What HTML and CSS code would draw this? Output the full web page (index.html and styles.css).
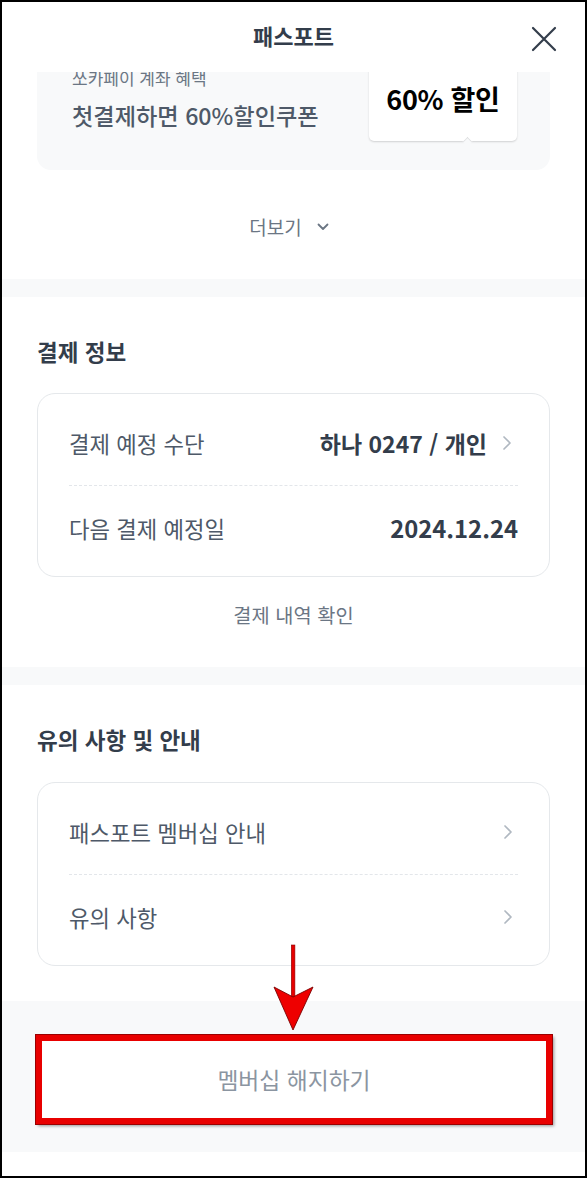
FILE: index.html
```html
<!DOCTYPE html>
<html lang="ko">
<head>
<meta charset="utf-8">
<title>패스포트</title>
<link rel="stylesheet" href="styles.css">
</head>
<body>
<div class="phone">
  <header class="header">
    <h1 class="title">패스포트</h1>
    <button class="close" aria-label="닫기">
      <svg width="26" height="26" viewBox="0 0 26 26"><path d="M2 2 L24 24 M24 2 L2 24" stroke="#333d4b" stroke-width="2.2" stroke-linecap="round" fill="none"/></svg>
    </button>
  </header>
  <div class="scroll">
    <div class="scroll-inner">
      <section class="section promo-section">
        <div class="promo-card">
          <div class="promo-text">
            <p class="promo-sub">쏘카페이 계좌 혜택</p>
            <p class="promo-title">첫결제하면 60%할인쿠폰</p>
          </div>
          <div class="coupon"><span>60% 할인</span></div>
        </div>
        <div class="more">
          <span>더보기</span>
          <svg width="14" height="10" viewBox="0 0 14 10"><path d="M2.5 2.5 L7 7 L11.5 2.5" stroke="#6b7684" stroke-width="1.8" fill="none" stroke-linecap="round" stroke-linejoin="round"/></svg>
        </div>
      </section>

      <section class="section info-section">
        <h2 class="sec-title">결제 정보</h2>
        <div class="card">
          <div class="row">
            <span class="label">결제 예정 수단</span>
            <span class="value-wrap"><span class="value">하나 0247 / 개인</span>
              <svg class="chev" width="20" height="20" viewBox="0 0 20 20"><path d="M4 4 L10 10 L4 16" stroke="#b0b8c1" stroke-width="1.7" fill="none" stroke-linecap="round" stroke-linejoin="round"/></svg>
            </span>
          </div>
          <div class="row">
            <span class="label">다음 결제 예정일</span>
            <span class="value">2024.12.24</span>
          </div>
        </div>
        <div class="link">결제 내역 확인</div>
      </section>

      <section class="section notice-section">
        <h2 class="sec-title">유의 사항 및 안내</h2>
        <div class="card">
          <div class="row">
            <span class="label">패스포트 멤버십 안내</span>
            <svg class="chev" width="20" height="20" viewBox="0 0 20 20"><path d="M4 4 L10 10 L4 16" stroke="#b0b8c1" stroke-width="1.7" fill="none" stroke-linecap="round" stroke-linejoin="round"/></svg>
          </div>
          <div class="row">
            <span class="label">유의 사항</span>
            <svg class="chev" width="20" height="20" viewBox="0 0 20 20"><path d="M4 4 L10 10 L4 16" stroke="#b0b8c1" stroke-width="1.7" fill="none" stroke-linecap="round" stroke-linejoin="round"/></svg>
          </div>
        </div>
      </section>

      <div class="bottom-area">
        <button class="cancel">멤버십 해지하기</button>
      </div>
      <div class="footer-space"></div>
    </div>
  </div>
  <svg class="arrow" width="46" height="92" viewBox="0 0 46 92">
    <rect x="19.3" y="3" width="3.6" height="54" fill="#e60000" stroke="#8a0000" stroke-width="0.6"/>
    <polygon points="2,45 21,55 41,45 21,88" fill="#ee0000" stroke="#7a0000" stroke-width="0.9" stroke-linejoin="miter"/>
  </svg>
</div>
</body>
</html>
```

FILE: styles.css
```css
* { box-sizing: border-box; }
html, body { margin: 0; padding: 0; background: #fff; }
body {
  font-family: "Noto Sans CJK KR", "Noto Sans", sans-serif;
  color: #333d4b;
}
p, h1, h2 { margin: 0; }

.phone {
  position: relative;
  width: 587px;
  height: 1178px;
  border: 2px solid #000;
  overflow: hidden;
  background: #fff;
  display: flex;
  flex-direction: column;
}

.header {
  height: 70px;
  flex: none;
  display: flex;
  align-items: center;
  justify-content: center;
  position: relative;
  background: #fff;
}
.title {
  font-size: 22px;
  font-weight: 700;
  color: #333d4b;
  line-height: 30px;
  margin-top: -4px;
}
.close {
  position: absolute;
  right: 28px;
  top: 24px;
  width: 26px;
  height: 26px;
  padding: 0;
  border: 0;
  background: none;
}
.close svg { display: block; }

.scroll {
  flex: 1;
  overflow: hidden;
  background: #f8f9fa;
}
.scroll-inner {
  margin-top: -30px;
}

.section {
  background: #fff;
  padding: 0 35px;
  margin-bottom: 18px;
}

.promo-section { padding-bottom: 39px; }
.promo-card {
  background: #f8f9fa;
  border-radius: 14px;
  height: 128px;
  display: flex;
  justify-content: space-between;
  align-items: flex-start;
  padding: 24px 33px 0 35px;
}
.promo-sub {
  font-size: 17px;
  line-height: 24px;
  color: #6b7684;
}
.promo-title {
  margin-top: 9px;
  font-size: 23.2px;
  line-height: 32px;
  font-weight: 500;
  color: #4e5968;
}
.coupon {
  position: relative;
  margin-top: -24px;
  width: 148px;
  height: 99px;
  background: #fff;
  border-radius: 0 0 5px 5px;
  box-shadow: 0 1px 2px rgba(0, 0, 0, 0.16);
  display: flex;
  align-items: flex-end;
  justify-content: center;
  padding-bottom: 24px;
}
.coupon span {
  font-size: 27px;
  line-height: 36px;
  font-weight: 700;
  color: #000;
  letter-spacing: -0.3px;
}
.coupon::after {
  content: "";
  position: absolute;
  left: 95px;
  bottom: -4px;
  width: 7px;
  height: 7px;
  background: #f8f9fa;
  transform: rotate(45deg);
  box-shadow: inset 1px 1px 1px rgba(0, 0, 0, 0.1);
}

.more {
  margin-top: 42px;
  height: 28px;
  display: flex;
  align-items: center;
  justify-content: center;
  gap: 14px;
  font-size: 19px;
  color: #6b7684;
  padding-right: 8px;
}
.more svg { margin-top: 1px; }

.sec-title {
  font-size: 22.5px;
  line-height: 30px;
  font-weight: 700;
  color: #333d4b;
}
.info-section { padding-top: 39px; padding-bottom: 38px; }
.notice-section { padding-top: 39px; padding-bottom: 35px; margin-bottom: 0; }

.card {
  margin-top: 27px;
  border: 1px solid #e5e8eb;
  border-radius: 18px;
  padding: 7px 31px;
  background: #fff;
}
.notice-section .card { margin-top: 28px; }
.row {
  height: 84px;
  display: flex;
  align-items: center;
  justify-content: space-between;
}
.row + .row { border-top: 1px dashed #e3e6ea; }
.label {
  font-size: 22.3px;
  color: #4e5968;
}
.value {
  font-size: 23px;
  font-weight: 700;
  color: #333d4b;
}
.row:last-child .value { font-size: 23.8px; }
.value-wrap {
  display: flex;
  align-items: center;
  gap: 13px;
}
.chev { display: block; margin-right: -3px; }
.value-wrap .chev { margin-right: -2px; }

.link {
  margin-top: 24px;
  height: 28px;
  line-height: 28px;
  text-align: center;
  font-size: 19.8px;
  color: #6b7684;
}

.bottom-area {
  background: #f8f9fa;
  padding: 34px 33px 28px 34px;
}
.cancel {
  display: block;
  width: 100%;
  height: 89px;
  background: #fff;
  border: 6px solid #e80000;
  outline: 1px solid #9a0000;
  box-shadow: 2px 2px 3px rgba(0, 0, 0, 0.4);
  font-family: inherit;
  font-size: 22.8px;
  color: #8b95a1;
  padding: 0;
}
.footer-space {
  background: #fff;
  height: 40px;
}

.arrow {
  position: absolute;
  left: 270px;
  top: 940px;
}
```
